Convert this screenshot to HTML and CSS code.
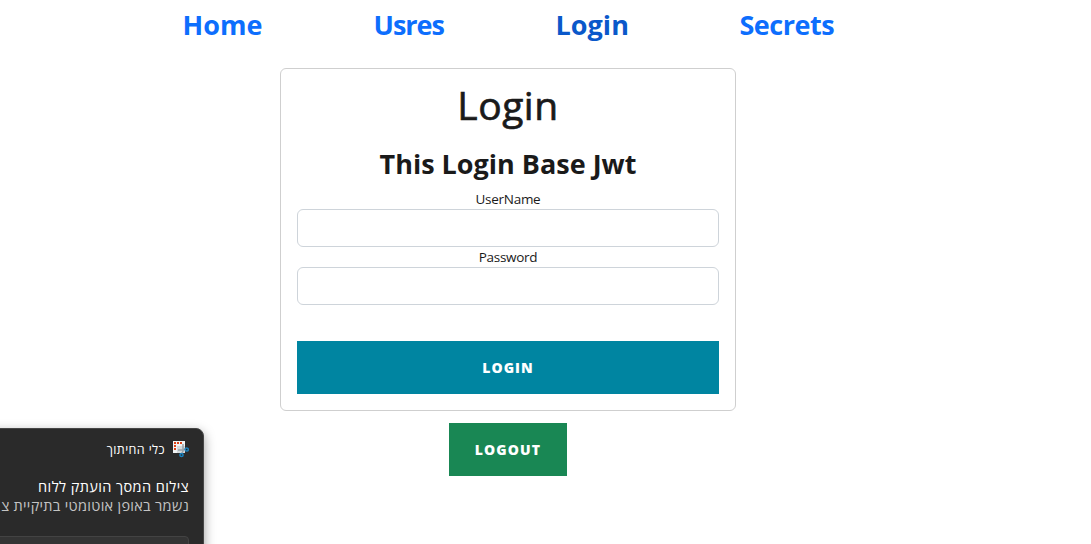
FILE: index.html
```html
<!DOCTYPE html>
<html lang="en">
<head>
<meta charset="utf-8">
<title>Login</title>
<link rel="stylesheet" href="styles.css">
</head>
<body>
<div class="page">
  <nav class="nav">
    <a class="home">Home</a>
    <a class="users">Usres</a>
    <a class="current">Login</a>
    <a class="secrets">Secrets</a>
  </nav>
  <main class="main">
    <form class="card">
      <h1>Login</h1>
      <h2>This Login Base Jwt</h2>
      <label class="user-label" for="u">UserName</label>
      <input id="u" type="text">
      <label class="pass-label" for="p">Password</label>
      <input id="p" type="password">
      <button class="btn login" type="button">LOGIN</button>
    </form>
    <button class="btn logout" type="button">LOGOUT</button>
  </main>
</div>
<aside class="toast" dir="rtl" lang="he">
  <div class="toast-app">
    <svg width="17" height="17" viewBox="0 0 17 17">
      <path d="M1 0h12v12H1z" fill="#f1f3f4"/>
      <path d="M5 5h8v7H5z" fill="#d3d8db"/>
      <path d="M2 1h2v2H2zM5 1h2v2H5zM8 1h2v2H8zM2 4h2v2H2zM2 7h2v2H2z" fill="#dc4318"/>
      <path d="M11 3v7l-1 2M6 9h5l2-1" fill="none" stroke="#98a2a9" stroke-width="1.500"/>
      <circle cx="14.700" cy="8.500" r="1.600" fill="none" stroke="#1b82bf" stroke-width="1.500"/>
      <circle cx="9.500" cy="14" r="1.600" fill="none" stroke="#1b82bf" stroke-width="1.500"/>
    </svg>
    <span>כלי החיתוך</span>
  </div>
  <div class="toast-title"><span>צילום המסך הועתק ללוח</span></div>
  <div class="toast-text"><span>נשמר באופן אוטומטי בתיקיית צ</span></div>
  <div class="toast-button"></div>
</aside>
</body>
</html>
```
FILE: styles.css
```css
* { box-sizing: border-box; }
body {
  margin: 0;
  height: 544px;
  overflow: hidden;
  background: #fff;
  color: #212529;
  font-family: "Open Sans", "Noto Sans", sans-serif;
}
.page { width: 1016px; }
.nav {
  display: flex;
  justify-content: center;
  gap: 111px;
  height: 68px;
  padding-top: 4px;
  font-size: 27px;
  line-height: 42px;
  font-weight: 700;
  color: #0d6efd;
  white-space: nowrap;
}
.nav .home { width: 80px; letter-spacing: 0; }
.nav .users { width: 71px; letter-spacing: -1px; }
.nav .current { width: 73px; color: #0a58ca; letter-spacing: 0.05px; }
.nav .secrets { width: 94px; letter-spacing: -0.5px; }
.main { display: flex; flex-direction: column; align-items: center; gap: 12px; }
.card {
  display: flex;
  flex-direction: column;
  width: 456px;
  height: 343px;
  padding: 12px 16px 16px;
  border: 1px solid #cfcfcf;
  border-radius: 6px;
  text-align: center;
  color: #1a1a1a;
}
h1 {
  margin: 0 0 14px;
  font-size: 39px;
  line-height: 47px;
  font-weight: 400;
  letter-spacing: 0.5px;
  -webkit-text-stroke: 0.7px #1a1a1a;
}
h2 { margin: 1px 0 4px; font-size: 27px; line-height: 42px; font-weight: 700; }
label { height: 20px; font-size: 13.5px; line-height: 20px; letter-spacing: -0.28px; }
input {
  width: 100%;
  height: 38px;
  border: 1px solid #ced4da;
  border-radius: 6px;
  background: #fff;
}
.btn {
  height: 53px;
  padding: 0;
  border: 0;
  color: #fff;
  font-family: "Open Sans", sans-serif;
  font-size: 14px;
  font-weight: 800;
  letter-spacing: 1.1px;
}
.login { margin-top: auto; background: #0085a1; }
.logout { width: 118px; background: #198754; }
.toast {
  position: absolute;
  left: -160px;
  top: 428px;
  width: 364px;
  height: 140px;
  padding: 12px 14px;
  background: #2a2a2a;
  border: 1px solid #464646;
  border-radius: 8px;
  box-shadow: 0 4px 12px rgba(0, 0, 0, .4);
  color: #fff;
  white-space: nowrap;
  overflow: hidden;
}
.toast-app { display: flex; gap: 7px; height: 18px; font-size: 12.5px; line-height: 18px; letter-spacing: 0.4px; }
.toast-title { margin-top: 18px; font-size: 14.5px; line-height: 20px; letter-spacing: 0.4px; }
.toast-text { font-size: 14.5px; line-height: 18px; letter-spacing: 0.3px; color: #c4c4c4; }
.toast-button { margin-top: 21px; height: 32px; background: #343434; border: 1px solid #434343; border-radius: 4px; }
```
